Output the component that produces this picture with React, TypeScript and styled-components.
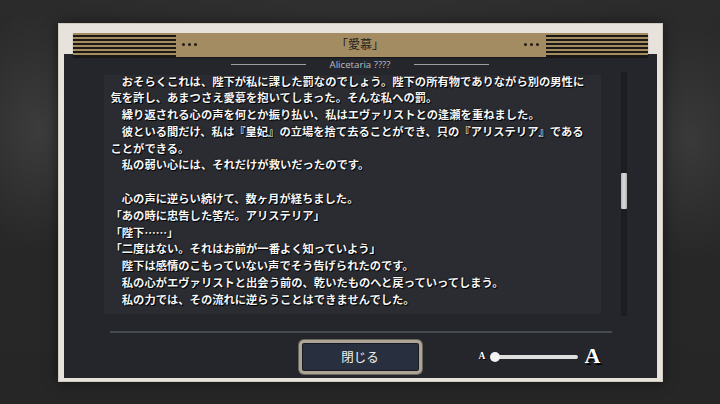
import React from "react";
import styled, { createGlobalStyle } from "styled-components";

const Global = createGlobalStyle`
  html, body { margin: 0; padding: 0; }
  body {
    width: 720px; height: 404px; overflow: hidden;
    background: #272727;
    font-family: "Noto Sans CJK JP", "Noto Sans", sans-serif;
  }
`;

const Page = styled.div`
  width: 720px;
  height: 404px;
  display: flex;
  align-items: center;
  justify-content: center;
  background:
    radial-gradient(ellipse 90px 120px at 40px 130px, rgba(255,255,255,0.09), transparent),
    radial-gradient(ellipse 80px 120px at 690px 140px, rgba(255,255,255,0.08), transparent),
    radial-gradient(ellipse 400px 60px at 360px 10px, rgba(255,255,255,0.03), transparent),
    linear-gradient(180deg, #2a2a2a, #262626);
`;

const Frame = styled.div`
  box-sizing: border-box;
  width: 605px;
  height: 359px;
  background: #e7e2db;
  border: 1px solid #cfc9c0;
  padding: 9px 5px 3px 5px;
  display: flex;
  flex-direction: column;
  box-shadow: 0 0 12px rgba(0,0,0,0.5);
`;

const Header = styled.div`
  position: relative;
  z-index: 1;
  height: 24px;
  margin: 0 9px -3px 9px;
  background: #a38b62;
  display: grid;
  grid-template-columns: 103px auto 1fr auto 102px;
  align-items: center;
  box-shadow: 0 1px 1px rgba(0,0,0,0.35);
`;

const Stripes = styled.div`
  height: 24px;
  background: repeating-linear-gradient(
    180deg,
    #a38b62 0px,
    #a38b62 1.6px,
    #1c1914 1.6px,
    #1c1914 4px
  );
`;

const Dots = styled.div<{ $side: "left" | "right" }>`
  display: flex;
  gap: 3px;
  margin: ${(p) => (p.$side === "left" ? "0 0 0 6px" : "0 7px 0 0")};
  span {
    width: 3px;
    height: 3px;
    border-radius: 50%;
    background: #221d16;
  }
`;

const Title = styled.div`
  text-align: center;
  font-size: 12px;
  color: #241f18;
  line-height: 24px;
  margin-top: -1px;
`;

const Dark = styled.div`
  flex: 1;
  background: #25262b;
  display: flex;
  flex-direction: column;
`;

const SubRow = styled.div`
  height: 20px;
  display: flex;
  align-items: center;
  justify-content: center;
  gap: 24px;
  padding-top: 1px;
`;

const SubLine = styled.div`
  width: 75px;
  height: 1px;
  background: #9a9ea6;
`;

const SubText = styled.div`
  font-family: "Open Sans", "Noto Sans", sans-serif;
  font-size: 9.7px;
  color: #b9bdc4;
  line-height: 12px;
`;

const Body = styled.div`
  margin-top: -3px;
  height: 244px;
  display: flex;
`;

const TextPanel = styled.div`
  box-sizing: border-box;
  margin: 3px 0 0 40px;
  width: 497px;
  height: 239px;
  background: #2b2c31;
  padding-left: 7px;
`;

const TextBlock = styled.div`
  margin-top: -2px;
  font-family: "Noto Sans CJK JP", sans-serif;
  font-size: 11.3px;
  font-weight: 700;
  line-height: 16.8px;
  color: #f6f6f6;
  white-space: pre;
  text-shadow: 1px 1px 0 #000, 0 0 2px #000;
`;

const Line = styled.div`
  height: 16.8px;
`;

const ScrollTrack = styled.div`
  margin-left: 20px;
  width: 6px;
  height: 244px;
  background: #1c1d21;
  display: flex;
  flex-direction: column;
  align-items: center;
`;

const ScrollThumb = styled.div`
  margin-top: 101px;
  width: 6px;
  height: 36px;
  border-radius: 1px;
  background: linear-gradient(90deg, #b8b8b8, #dcdcdc 50%, #b0b0b0);
`;

const Separator = styled.div`
  margin: 15px 0 0 46px;
  width: 502px;
  height: 2px;
  background: #464a51;
`;

const BottomRow = styled.div`
  margin-top: 7px;
  height: 34px;
  display: grid;
  grid-template-columns: 1fr auto 1fr;
  align-items: center;
`;

const CloseButton = styled.button`
  grid-column: 2;
  box-sizing: border-box;
  width: 123px;
  height: 34px;
  border-radius: 5px;
  border: 3px solid #aca596;
  background: #283040;
  box-shadow: inset 0 0 0 1px #161a22, 0 0 0 1px #6b665c;
  color: #f0f0f0;
  font-family: "Noto Sans CJK JP", sans-serif;
  font-size: 12.5px;
  padding: 0;
  padding-bottom: 1px;
  cursor: pointer;
`;

const SizeControl = styled.div`
  grid-column: 3;
  display: flex;
  align-items: center;
  padding-left: 57px;
`;

const LetterA = styled.span<{ $big?: boolean }>`
  font-family: "Liberation Serif", "DejaVu Serif", serif;
  font-weight: 700;
  color: #fff;
  font-size: ${(p) => (p.$big ? "22px" : "9.5px")};
  line-height: 1;
  text-shadow: ${(p) => (p.$big ? "2px 2px 0 #000" : "1px 1px 0 #000")};
  margin-left: ${(p) => (p.$big ? "6px" : "0")};
  margin-top: ${(p) => (p.$big ? "-1px" : "1px")};
`;

const Track = styled.div`
  position: relative;
  margin-left: 5px;
  width: 88px;
  height: 10px;
  display: flex;
  align-items: center;
`;

const TrackBar = styled.div`
  margin-left: 5px;
  flex: 1;
  height: 4px;
  border-radius: 2px;
  background: #dedede;
`;

const Knob = styled.div`
  position: absolute;
  left: 0;
  top: 0;
  width: 10px;
  height: 10px;
  border-radius: 50%;
  background: #f2f2f2;
`;

const lines: string[] = [
  "　おそらくこれは、陛下が私に課した罰なのでしょう。陛下の所有物でありながら別の男性に",
  "気を許し、あまつさえ愛慕を抱いてしまった。そんな私への罰。",
  "　繰り返される心の声を何とか振り払い、私はエヴァリストとの逢瀬を重ねました。",
  "　彼といる間だけ、私は『皇妃』の立場を捨て去ることができ、只の『アリステリア』である",
  "ことができる。",
  "　私の弱い心には、それだけが救いだったのです。",
  "",
  "　心の声に逆らい続けて、数ヶ月が経ちました。",
  "「あの時に忠告した筈だ。アリステリア」",
  "「陛下……」",
  "「二度はない。それはお前が一番よく知っていよう」",
  "　陛下は感情のこもっていない声でそう告げられたのです。",
  "　私の心がエヴァリストと出会う前の、乾いたものへと戻っていってしまう。",
  "　私の力では、その流れに逆らうことはできませんでした。",
];

export default function App() {
  return (
    <>
      <Global />
      <Page>
        <Frame>
          <Header>
            <Stripes />
            <Dots $side="left">
              <span />
              <span />
              <span />
            </Dots>
            <Title>「愛慕」</Title>
            <Dots $side="right">
              <span />
              <span />
              <span />
            </Dots>
            <Stripes />
          </Header>
          <Dark>
            <SubRow>
              <SubLine />
              <SubText>Alicetaria ????</SubText>
              <SubLine />
            </SubRow>
            <Body>
              <TextPanel>
                <TextBlock>
                  {lines.map((l, i) => (
                    <Line key={i}>{l}</Line>
                  ))}
                </TextBlock>
              </TextPanel>
              <ScrollTrack>
                <ScrollThumb />
              </ScrollTrack>
            </Body>
            <Separator />
            <BottomRow>
              <CloseButton>閉じる</CloseButton>
              <SizeControl>
                <LetterA>A</LetterA>
                <Track>
                  <TrackBar />
                  <Knob />
                </Track>
                <LetterA $big>A</LetterA>
              </SizeControl>
            </BottomRow>
          </Dark>
        </Frame>
      </Page>
    </>
  );
}
